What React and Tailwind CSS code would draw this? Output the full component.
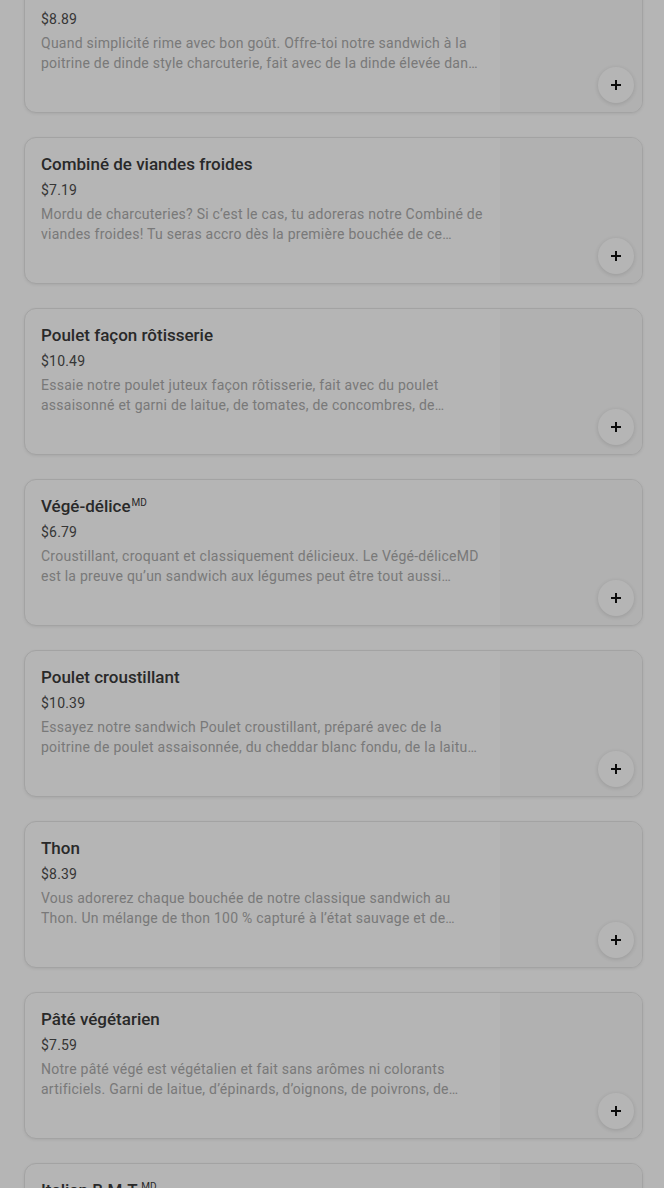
import React from 'react';

// Liste du menu, avec un voile gris par-dessus (fenêtre modale ouverte).

const items = [
  {
    nom: 'Poitrine de dinde',
    prix: '$8.89',
    desc: 'Quand simplicité rime avec bon goût. Offre-toi notre sandwich à la poitrine de dinde style charcuterie, fait avec de la dinde élevée dans des fermes canadiennes.',
  },
  {
    nom: 'Combiné de viandes froides',
    prix: '$7.19',
    desc: 'Mordu de charcuteries? Si c’est le cas, tu adoreras notre Combiné de viandes froides! Tu seras accro dès la première bouchée de ce sandwich classique.',
  },
  {
    nom: 'Poulet façon rôtisserie',
    prix: '$10.49',
    desc: 'Essaie notre poulet juteux façon rôtisserie, fait avec du poulet assaisonné et garni de laitue, de tomates, de concombres, de poivrons verts.',
  },
  {
    nom: 'Végé-délice',
    sup: 'MD',
    prix: '$6.79',
    desc: 'Croustillant, croquant et classiquement délicieux. Le Végé-déliceMD est la preuve qu’un sandwich aux légumes peut être tout aussi savoureux.',
  },
  {
    nom: 'Poulet croustillant',
    prix: '$10.39',
    desc: 'Essayez notre sandwich Poulet croustillant, préparé avec de la poitrine de poulet assaisonnée, du cheddar blanc fondu, de la laitue et des tomates.',
  },
  {
    nom: 'Thon',
    prix: '$8.39',
    desc: 'Vous adorerez chaque bouchée de notre classique sandwich au Thon. Un mélange de thon 100 % capturé à l’état sauvage et de mayonnaise.',
  },
  {
    nom: 'Pâté végétarien',
    prix: '$7.59',
    desc: 'Notre pâté végé est végétalien et fait sans arômes ni colorants artificiels. Garni de laitue, d’épinards, d’oignons, de poivrons, de tomates.',
  },
  {
    nom: 'Italian B.M.T.',
    sup: 'MD',
    prix: '$9.19',
    desc: 'Le Italian B.M.T.MD est garni de pepperoni, de salami Genoa et de jambon forêt noire.',
  },
];

function Carte({ item }) {
  return (
    <div className="flex h-[147px] rounded-xl border border-[#e6e6e6] bg-white shadow-[0_1px_3px_rgba(0,0,0,0.08)] overflow-hidden">
      <div className="flex-1 min-w-0 pl-4 pr-[16px] pt-[15px]">
        <h3 className="text-[17px] leading-[22px] font-medium text-[#3a3a3a]">
          {item.nom}
          {item.sup && <span className="text-[10px] leading-none font-normal ml-[1px] align-top relative top-[3px]">{item.sup}</span>}
        </h3>
        <p className="mt-[5px] text-[14px] leading-[20px] text-[#4d4d4d] tracking-[0.2px]">{item.prix}</p>
        <p className="mt-[4px] text-[14px] leading-[20px] text-[#ababab] tracking-[0.25px] line-clamp-2">{item.desc}</p>
      </div>
      <div className="relative w-[142px] shrink-0 bg-[#fafafa]">
        <button className="absolute right-[8px] bottom-[9px] w-9 h-9 rounded-full bg-white shadow-[0_1px_5px_rgba(0,0,0,0.14)] flex items-center justify-center">
          <svg width="12" height="12" viewBox="0 0 12 12">
            <path d="M6 1v10M1 6h10" stroke="#111" strokeWidth="2" />
          </svg>
        </button>
      </div>
    </div>
  );
}

export default function App() {
  return (
    <div className="relative h-[1188px] overflow-hidden bg-white" style={{ fontFamily: 'Roboto, "Noto Sans", sans-serif' }}>
      <div className="flex flex-col gap-[24px] pl-[24px] pr-[21px] mt-[-34px]">
        {items.map((item, i) => (
          <Carte key={i} item={item} />
        ))}
      </div>
      {/* voile de la fenêtre modale */}
      <div className="absolute inset-0 bg-black/[0.29]" />
    </div>
  );
}
